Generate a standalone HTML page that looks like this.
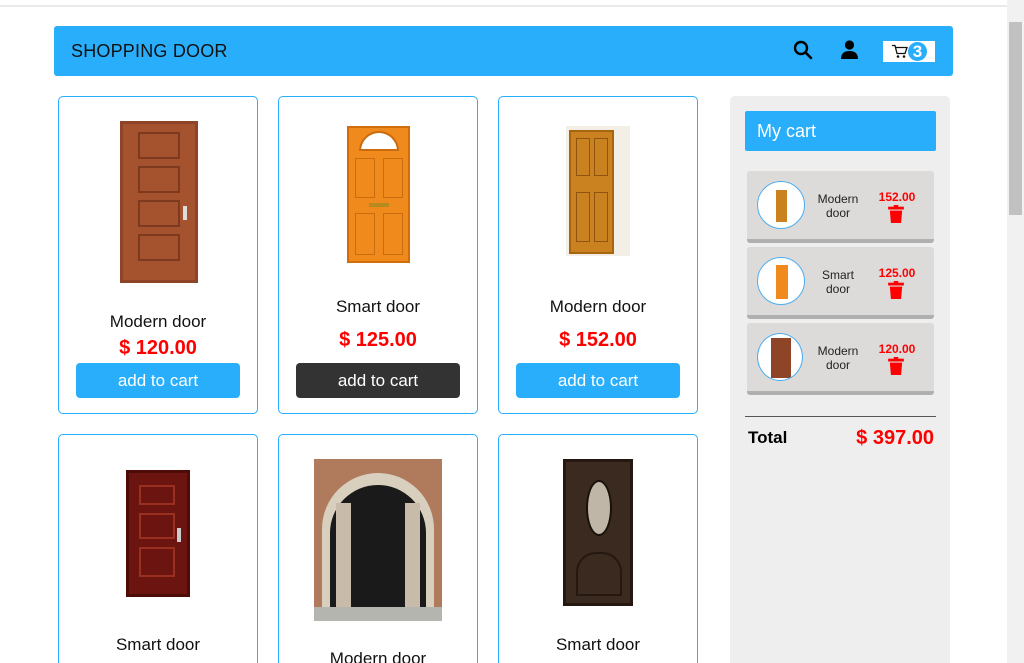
<!DOCTYPE html>
<html><head><meta charset="utf-8"><style>
*{margin:0;padding:0;box-sizing:border-box}
html,body{width:1024px;height:663px;overflow:hidden}
body{background:#fff;font-family:"Liberation Sans",Arial,sans-serif;position:relative}
.a{position:absolute}
.hdr{left:54px;top:26px;width:899px;height:50px;background:#29aefc;border-radius:3px}
.card{width:200px;height:318px;border:1px solid #29aefc;border-radius:5px;background:#fff}
.name{width:200px;text-align:center;font-size:17px;color:#111}
.price{width:200px;text-align:center;font-size:20px;font-weight:bold;color:#f00}
.btn{width:164px;height:35px;border-radius:4px;background:#29aefc;color:#fff;font-size:17px;text-align:center;line-height:35px}
.item{left:747px;width:187px;height:72px;background:#dcdbda;border-radius:3px;border-bottom:4px solid #b0b0b0}
.circ{left:10px;top:10px;width:48px;height:48px;border-radius:50%;border:1px solid #4aaef0;background:#fff;overflow:hidden}
.iname{left:62px;top:21px;width:58px;text-align:center;font-size:12px;line-height:14px;color:#222}
.ip{left:125px;top:19px;width:50px;text-align:center;font-size:12px;font-weight:bold;color:#f00}
.bin{left:141px;top:34px}
</style></head><body>
<div class="a" style="left:0;top:5px;width:1007px;height:2px;background:#eaeaea"></div>
<div class="a" style="left:1007px;top:0;width:17px;height:663px;background:#f1f1f1"></div>
<div class="a" style="left:1009px;top:22px;width:13px;height:193px;background:#c1c1c1"></div>

<div class="a hdr"></div>
<div class="a" style="left:71px;top:41px;font-size:18px;color:#111;letter-spacing:0.2px">SHOPPING DOOR</div>
<svg class="a" style="left:793px;top:40px" width="20" height="20" viewBox="0 0 20 20"><circle cx="8" cy="8" r="6" fill="none" stroke="#000" stroke-width="2.4"/><line x1="12.5" y1="12.5" x2="18" y2="18" stroke="#000" stroke-width="2.6" stroke-linecap="round"/></svg>
<svg class="a" style="left:840px;top:40px" width="19" height="19" viewBox="0 0 19 19"><circle cx="9.5" cy="5" r="4.6" fill="#000"/><path d="M1 19 Q1 11 9.5 11 Q18 11 18 19Z" fill="#000"/></svg>
<div class="a" style="left:883px;top:41px;width:52px;height:21px;background:#fff"></div>
<svg class="a" style="left:891px;top:44px" width="17" height="15" viewBox="0 0 17 15"><path d="M1 1.5h3l2 8h8l2-6H5" fill="none" stroke="#111" stroke-width="1.3"/><circle cx="7" cy="12.5" r="1.3" fill="#111"/><circle cx="13" cy="12.5" r="1.3" fill="#111"/></svg>
<div class="a" style="left:908px;top:42px;width:19px;height:19px;border-radius:50%;background:#29aefc;color:#fff;font-size:17px;font-weight:bold;text-align:center;line-height:19px">3</div>

<div class="a card" style="left:58px;top:96px"></div>
<div class="a card" style="left:278px;top:96px"></div>
<div class="a card" style="left:498px;top:96px"></div>
<div class="a card" style="left:58px;top:434px;height:240px"></div>
<div class="a card" style="left:278px;top:434px;height:240px"></div>
<div class="a card" style="left:498px;top:434px;height:240px"></div>

<div class="a" style="left:120px;top:121px;width:78px;height:162px;background:#a5532f;border:3px solid #8e4426">
 <div class="a" style="left:15px;top:8px;width:42px;height:27px;border:2px solid #7d3a1e"></div>
 <div class="a" style="left:15px;top:42px;width:42px;height:27px;border:2px solid #7d3a1e"></div>
 <div class="a" style="left:15px;top:76px;width:42px;height:27px;border:2px solid #7d3a1e"></div>
 <div class="a" style="left:15px;top:110px;width:42px;height:27px;border:2px solid #7d3a1e"></div>
 <div class="a" style="left:60px;top:82px;width:4px;height:14px;background:#ddd"></div>
</div>
<div class="a" style="left:347px;top:126px;width:63px;height:137px;background:#f08a1c;border:2px solid #d06e0c">
 <div class="a" style="left:10px;top:3px;width:40px;height:20px;border-radius:20px 20px 0 0;background:#fff;border:2px solid #c96c10"></div>
 <div class="a" style="left:6px;top:30px;width:20px;height:40px;border:1px solid #c96c10"></div>
 <div class="a" style="left:34px;top:30px;width:20px;height:40px;border:1px solid #c96c10"></div>
 <div class="a" style="left:6px;top:85px;width:20px;height:42px;border:1px solid #c96c10"></div>
 <div class="a" style="left:34px;top:85px;width:20px;height:42px;border:1px solid #c96c10"></div>
 <div class="a" style="left:20px;top:75px;width:20px;height:4px;background:#b58b20"></div>
</div>
<div class="a" style="left:566px;top:126px;width:64px;height:130px;background:#f4efe6"></div>
<div class="a" style="left:569px;top:130px;width:45px;height:124px;background:#c9821f;border:2px solid #a8640f">
 <div class="a" style="left:5px;top:6px;width:14px;height:38px;border:1px solid #8e5410"></div>
 <div class="a" style="left:23px;top:6px;width:14px;height:38px;border:1px solid #8e5410"></div>
 <div class="a" style="left:5px;top:60px;width:14px;height:50px;border:1px solid #8e5410"></div>
 <div class="a" style="left:23px;top:60px;width:14px;height:50px;border:1px solid #8e5410"></div>
</div>

<div class="a name" style="left:58px;top:312px">Modern door</div>
<div class="a price" style="left:58px;top:337px">$ 120.00</div>
<div class="a btn" style="left:76px;top:363px">add to cart</div>
<div class="a name" style="left:278px;top:297px">Smart door</div>
<div class="a price" style="left:278px;top:329px">$ 125.00</div>
<div class="a btn" style="left:296px;top:363px;background:#333">add to cart</div>
<div class="a name" style="left:498px;top:297px">Modern door</div>
<div class="a price" style="left:498px;top:329px">$ 152.00</div>
<div class="a btn" style="left:516px;top:363px">add to cart</div>

<div class="a" style="left:126px;top:470px;width:64px;height:127px;background:#6b1410;border:3px solid #4e0c08">
 <div class="a" style="left:10px;top:12px;width:36px;height:20px;border:2px solid #9a3020"></div>
 <div class="a" style="left:10px;top:40px;width:36px;height:26px;border:2px solid #9a3020"></div>
 <div class="a" style="left:10px;top:74px;width:36px;height:30px;border:2px solid #9a3020"></div>
 <div class="a" style="left:48px;top:55px;width:4px;height:14px;background:#ccc"></div>
</div>
<div class="a" style="left:314px;top:459px;width:128px;height:162px;background:#b07a5c">
 <div class="a" style="left:8px;top:14px;width:112px;height:140px;border-radius:56px 56px 0 0;background:#d9cfbf"></div>
 <div class="a" style="left:16px;top:26px;width:96px;height:126px;border-radius:48px 48px 0 0;background:#1a1a1a"></div>
 <div class="a" style="left:22px;top:44px;width:15px;height:104px;background:#c9bba9"></div>
 <div class="a" style="left:91px;top:44px;width:15px;height:104px;background:#c9bba9"></div>
 <div class="a" style="left:0;top:148px;width:128px;height:14px;background:#b5b5b0"></div>
</div>
<div class="a" style="left:563px;top:459px;width:70px;height:147px;background:#3a2a1f;border:3px solid #241810">
 <div class="a" style="left:20px;top:18px;width:26px;height:56px;border-radius:50%;background:#bfb6a8;border:2px solid #1a110a"></div>
 <div class="a" style="left:10px;top:90px;width:46px;height:44px;border-radius:20px 20px 0 0;border:2px solid #241810"></div>
</div>
<div class="a name" style="left:58px;top:635px">Smart door</div>
<div class="a name" style="left:278px;top:649px">Modern door</div>
<div class="a name" style="left:498px;top:635px">Smart door</div>

<div class="a" style="left:730px;top:96px;width:220px;height:580px;background:#eee;border-radius:5px"></div>
<div class="a" style="left:745px;top:111px;width:191px;height:40px;background:#29aefc;border-radius:2px;color:#fff;font-size:18px;line-height:40px;padding-left:12px">My cart</div>

<div class="a item" style="top:171px">
 <div class="a circ"><div class="a" style="left:18px;top:8px;width:11px;height:32px;background:#c9821f"></div></div>
 <div class="a iname">Modern<br>door</div><div class="a ip">152.00</div>
 <svg class="a bin" width="16" height="18" viewBox="0 0 14 16"><rect x="0" y="1.5" width="14" height="2.5" fill="#f00"/><rect x="5" y="0" width="4" height="2" fill="#f00"/><path d="M1.5 5h11l-1 11h-9z" fill="#f00"/></svg>
</div>
<div class="a item" style="top:247px">
 <div class="a circ"><div class="a" style="left:18px;top:7px;width:12px;height:34px;background:#f08a1c"></div></div>
 <div class="a iname">Smart<br>door</div><div class="a ip">125.00</div>
 <svg class="a bin" width="16" height="18" viewBox="0 0 14 16"><rect x="0" y="1.5" width="14" height="2.5" fill="#f00"/><rect x="5" y="0" width="4" height="2" fill="#f00"/><path d="M1.5 5h11l-1 11h-9z" fill="#f00"/></svg>
</div>
<div class="a item" style="top:323px">
 <div class="a circ" style="width:46px;height:48px"><div class="a" style="left:13px;top:4px;width:20px;height:40px;background:#8e4426"></div></div>
 <div class="a iname">Modern<br>door</div><div class="a ip">120.00</div>
 <svg class="a bin" width="16" height="18" viewBox="0 0 14 16"><rect x="0" y="1.5" width="14" height="2.5" fill="#f00"/><rect x="5" y="0" width="4" height="2" fill="#f00"/><path d="M1.5 5h11l-1 11h-9z" fill="#f00"/></svg>
</div>

<div class="a" style="left:745px;top:416px;width:191px;height:1px;background:#555"></div>
<div class="a" style="left:748px;top:428px;font-size:17px;font-weight:bold;color:#000">Total</div>
<div class="a" style="left:820px;top:427px;width:114px;text-align:right;font-size:20px;font-weight:bold;color:#f00">$ 397.00</div>
</body></html>
